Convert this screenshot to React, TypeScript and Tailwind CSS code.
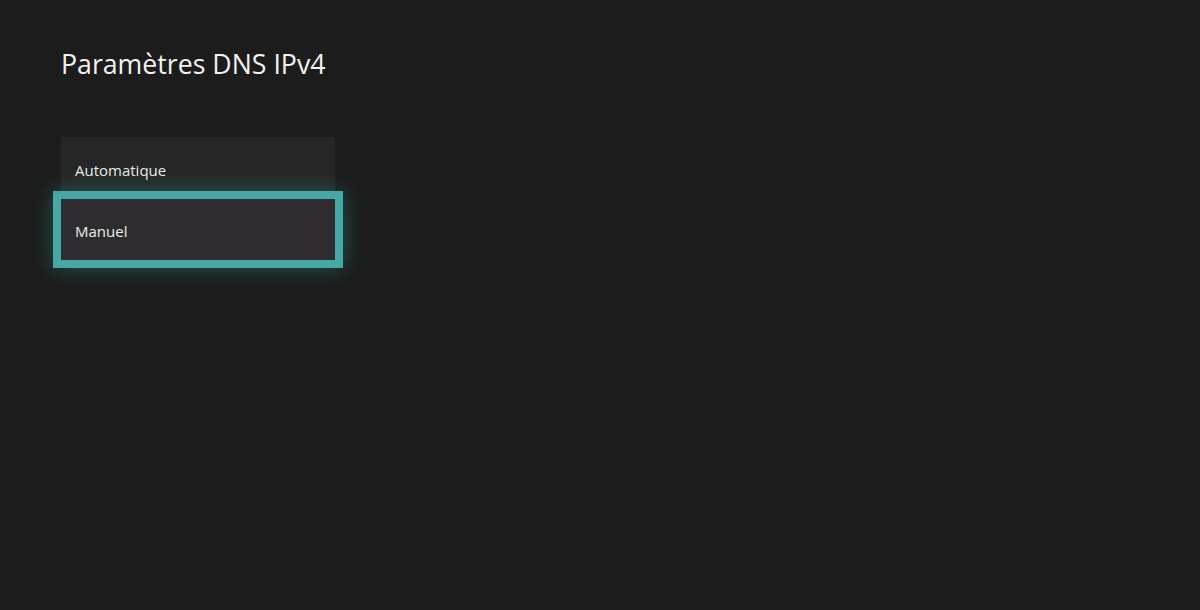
export default function App() {
  return (
    <div
      className="w-[1200px] h-[610px] bg-[#1c1c1c] overflow-hidden pl-[61px] pt-[46px]"
      style={{ fontFamily: '"Open Sans", "Noto Sans", sans-serif' }}
    >
      <h1 className="text-[26.7px] leading-[36px] text-[#f2f2f2]">
        Paramètres DNS IPv4
      </h1>
      <div className="mt-[55px] w-[274px] flex flex-col">
        <div className="h-[62px] bg-[#262626] flex items-center px-[14px] pt-[5px] text-[15px] text-[#ececec]">
          Automatique
        </div>
        <div className="h-[61px] bg-[#2e2c2e] flex items-center px-[14px] pt-[3px] text-[15px] text-[#ececec] outline-8 outline-[#46a8a4] shadow-[0_0_20px_8px_rgba(50,170,165,0.4)]">
          Manuel
        </div>
      </div>
    </div>
  );
}
